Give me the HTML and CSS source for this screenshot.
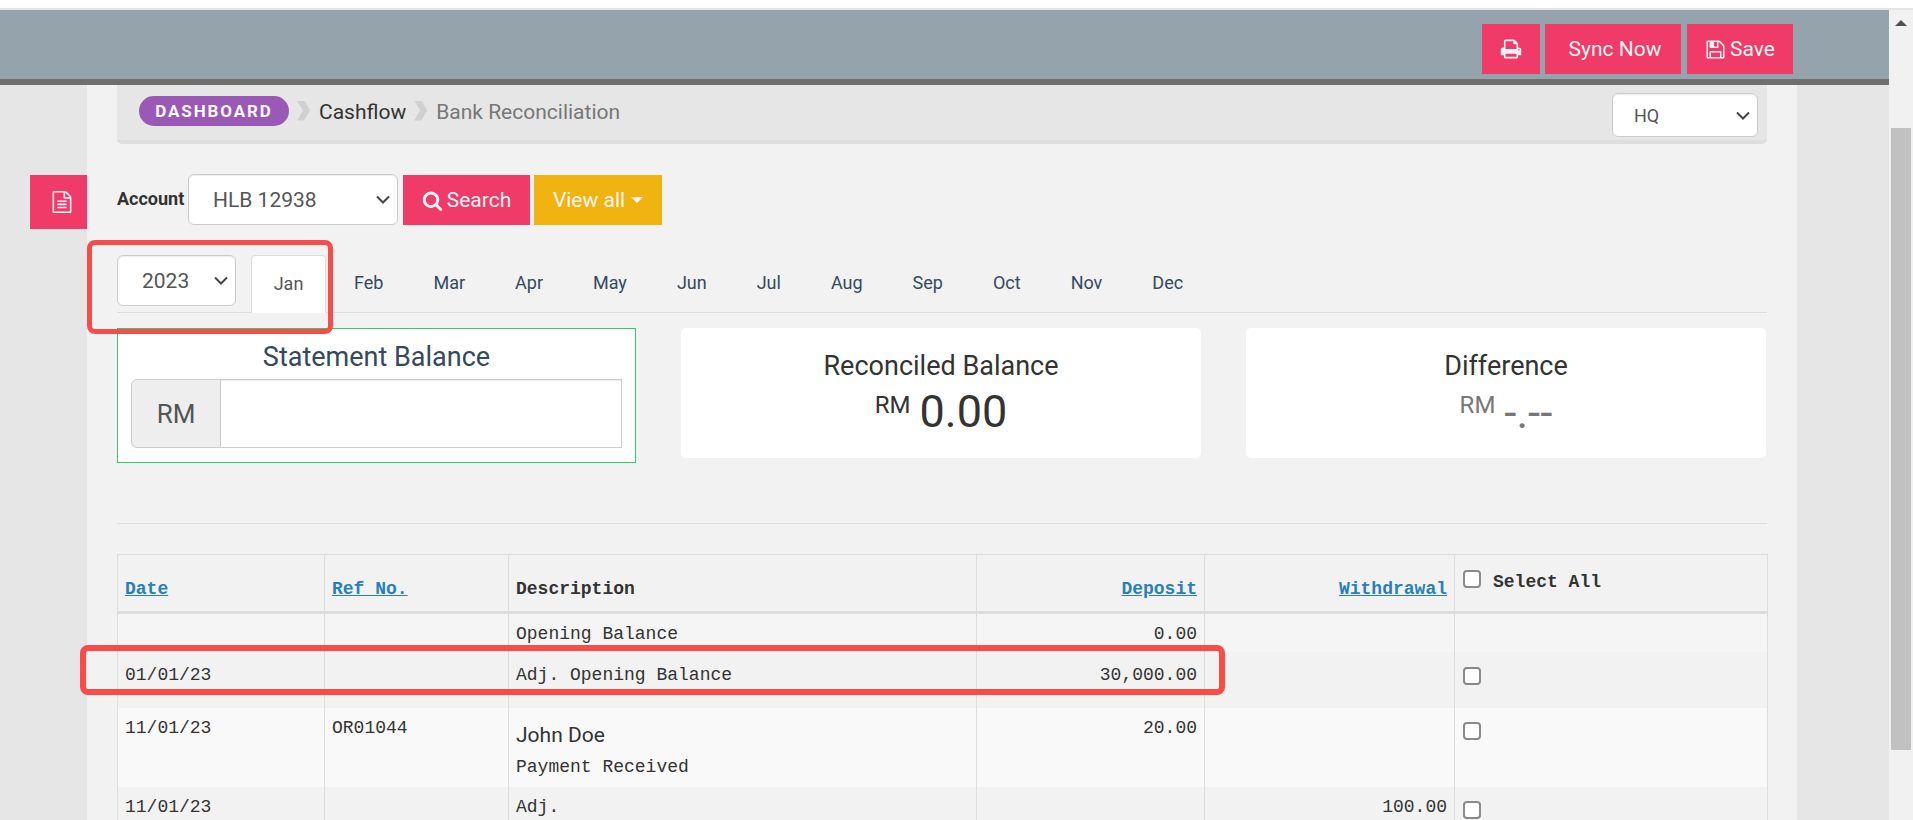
FILE: index.html
```html
<!DOCTYPE html>
<html lang="en">
<head>
<meta charset="utf-8">
<title>Bank Reconciliation</title>
<link rel="stylesheet" href="styles.css">
</head>
<body>
<div class="page">
  <div class="top-strip"></div>
  <div class="frame">
    <div class="viewport">
      <header class="toolbar">
        <button class="btn btn-print" type="button" aria-label="Print">
          <svg class="icon icon-print" viewBox="0 0 1792 1792"><path d="M448 1536h896v-256h-896v256zm0-640h896v-384h-160q-40 0-68-28t-28-68v-160h-640v640zm1152 64q0-26-19-45t-45-19-45 19-19 45 19 45 45 19 45-19 19-45zm128 0v416q0 13-9.500 22.500t-22.500 9.500h-224v160q0 40-28 68t-68 28h-960q-40 0-68-28t-28-68v-160h-224q-13 0-22.500-9.500t-9.500-22.500v-416q0-79 56.500-135.500t135.500-56.500h64v-544q0-40 28-68t68-28h672q40 0 88 20t76 48l152 152q28 28 48 76t20 88v256h64q79 0 135.500 56.500t56.500 135.500z"/></svg>
        </button>
        <button class="btn btn-sync" type="button">Sync Now</button>
        <button class="btn btn-save" type="button">
          <svg class="icon icon-save" viewBox="0 0 1792 1792"><path d="M512 1536h768v-384h-768v384zm896 0h128v-896q0-14-10-38.500t-20-34.500l-281-281q-10-10-34-20t-39-10v416q0 40-28 68t-68 28h-576q-40 0-68-28t-28-68v-416h-128v1280h128v-416q0-40 28-68t68-28h832q40 0 68 28t28 68v416zm-384-928v-320q0-13-9.500-22.500t-22.500-9.500h-192q-13 0-22.500 9.500t-9.500 22.500v320q0 13 9.500 22.500t22.500 9.500h192q13 0 22.500-9.500t9.500-22.500zm640 32v928q0 40-28 68t-68 28h-1344q-40 0-68-28t-28-68v-1344q0-40 28-68t68-28h928q40 0 88 20t76 48l280 280q28 28 48 76t20 88z"/></svg>
          Save
        </button>
      </header>
      <div class="workspace">
        <aside class="gutter">
          <button class="side-btn" type="button" aria-label="Notes">
            <svg class="icon icon-file" viewBox="0 0 1792 1792"><path d="M1596 380q28 28 48 76t20 88v1152q0 40-28 68t-68 28h-1344q-40 0-68-28t-28-68v-1600q0-40 28-68t68-28h896q40 0 88 20t76 48zm-444-244v376h376q-10-29-22-41l-313-313q-12-12-41-22zm384 1528v-1024h-416q-40 0-68-28t-28-68v-416h-768v1536h1280zm-1024-864q0-14 9-23t23-9h704q14 0 23 9t9 23v64q0 14-9 23t-23 9h-704q-14 0-23-9t-9-23v-64zm736 224q14 0 23 9t9 23v64q0 14-9 23t-23 9h-704q-14 0-23-9t-9-23v-64q0-14 9-23t23-9h704zm0 256q14 0 23 9t9 23v64q0 14-9 23t-23 9h-704q-14 0-23-9t-9-23v-64q0-14 9-23t23-9h704z"/></svg>
          </button>
        </aside>
        <main class="content">
          <nav class="crumbs">
            <span class="pill">DASHBOARD</span>
            <span class="chev"></span>
            <span class="crumb">Cashflow</span>
            <span class="chev"></span>
            <span class="crumb crumb-current">Bank Reconciliation</span>
            <select class="select select-branch"><option>HQ</option></select>
          </nav>
          <form class="filter">
            <label class="filter-label">Account</label>
            <select class="select select-account"><option>HLB 12938</option></select>
            <button class="btn btn-search" type="button">
              <svg class="icon icon-search" viewBox="0 0 1792 1792"><path d="M1216 832q0-185-131.500-316.500t-316.500-131.500-316.500 131.500-131.500 316.500 131.500 316.500 316.500 131.500 316.500-131.500 131.500-316.500zm512 832q0 52-38 90t-90 38q-54 0-90-38l-343-342q-179 124-399 124-143 0-273.500-55.500t-225-150-150-225-55.500-273.500 55.500-273.500 150-225 225-150 273.500-55.500 273.500 55.500 225 150 150 225 55.500 273.500q0 220-124 399l343 343q37 37 37 90z"/></svg>
              Search
            </button>
            <button class="btn btn-view" type="button">View all <span class="caret"></span></button>
          </form>
          <div class="tabs">
            <select class="select select-year"><option>2023</option></select>
            <ul class="tab-list">
              <li class="tab tab-active">Jan</li>
              <li class="tab">Feb</li>
              <li class="tab">Mar</li>
              <li class="tab">Apr</li>
              <li class="tab">May</li>
              <li class="tab">Jun</li>
              <li class="tab">Jul</li>
              <li class="tab">Aug</li>
              <li class="tab">Sep</li>
              <li class="tab">Oct</li>
              <li class="tab">Nov</li>
              <li class="tab">Dec</li>
            </ul>
          </div>
          <section class="cards">
            <div class="card card-input">
              <h3 class="card-title title-statement">Statement Balance</h3>
              <div class="input-group">
                <span class="addon">RM</span>
                <input class="amount-input" type="text">
              </div>
            </div>
            <div class="card card-stat">
              <h3 class="card-title">Reconciled Balance</h3>
              <div class="stat"><sup class="stat-unit">RM</sup> <span class="stat-value">0.00</span></div>
            </div>
            <div class="card card-stat card-muted">
              <h3 class="card-title">Difference</h3>
              <div class="stat"><sup class="stat-unit">RM</sup> <span class="stat-value stat-empty">-.--</span></div>
            </div>
          </section>
          <hr class="rule">
          <table class="ledger">
            <colgroup>
              <col class="c-date"><col class="c-ref"><col class="c-desc"><col class="c-dep"><col class="c-wd"><col class="c-sel">
            </colgroup>
            <thead>
              <tr>
                <th><a class="sort" href="#">Date</a></th>
                <th><a class="sort" href="#">Ref No.</a></th>
                <th>Description</th>
                <th class="num"><a class="sort" href="#">Deposit</a></th>
                <th class="num"><a class="sort" href="#">Withdrawal</a></th>
                <th class="th-select"><input class="check" type="checkbox"><span class="select-all">Select All</span></th>
              </tr>
            </thead>
            <tbody>
              <tr class="row-a">
                <td></td><td></td><td>Opening Balance</td><td class="num">0.00</td><td></td><td></td>
              </tr>
              <tr class="row-b row-adj">
                <td>01/01/23</td><td></td><td>Adj. Opening Balance</td><td class="num">30,000.00</td><td></td><td class="td-check"><input class="check" type="checkbox"></td>
              </tr>
              <tr class="row-c">
                <td>11/01/23</td><td>OR01044</td><td><div class="payer">John Doe</div><div>Payment Received</div></td><td class="num">20.00</td><td></td><td class="td-check"><input class="check" type="checkbox"></td>
              </tr>
              <tr class="row-b">
                <td>11/01/23</td><td></td><td>Adj.</td><td></td><td class="num">100.00</td><td class="td-check"><input class="check" type="checkbox"></td>
              </tr>
            </tbody>
          </table>
        </main>
        <div class="margin-right"></div>
      </div>
    </div>
    <div class="scrollbar">
      <span class="scroll-up"></span>
      <span class="scroll-thumb"></span>
    </div>
  </div>
  <div class="mark mark-period"></div>
  <div class="mark mark-row"></div>
</div>
</body>
</html>
```
FILE: styles.css
```css
* { box-sizing: border-box; }
html, body { margin: 0; padding: 0; height: 820px; overflow: hidden; }
body { font-family: Roboto, "Liberation Sans", sans-serif; color: #333; background: #fff; }
.page { position: relative; width: 1913px; height: 820px; overflow: hidden; }
.top-strip { height: 10px; background: #fff; border-bottom: 2px solid #e4e4e4; }
.frame { display: flex; height: 810px; }
.viewport { width: 1889px; height: 810px; overflow: hidden; background: #e6e6e6; }

.toolbar { height: 75px; display: flex; justify-content: flex-end; align-items: flex-start; padding: 14px 96px 0 0; background: #95a3ac; border-bottom: 6px solid #6f6f6f; }
.btn { border: 0; margin: 0; color: #f5f5f5; background: #f03a68; font: 400 21px Roboto, sans-serif; height: 50px; display: flex; align-items: center; justify-content: center; gap: 5px; padding: 0; }
.icon { width: 20px; height: 20px; fill: currentColor; display: block; }
.icon-print { width: 22px; height: 22px; }
.icon-save { width: 21px; height: 21px; }
.btn-print { width: 58px; margin-right: 5px; }
.btn-sync { width: 136px; margin-right: 6px; padding-left: 4px; }
.btn-save { width: 106px; gap: 4px; }

.workspace { display: flex; height: 735px; }
.gutter { width: 87px; padding: 90px 0 0 30px; flex: none; }
.side-btn { width: 57px; height: 54px; border: 0; padding: 0 0 0 7px; background: #f03a68; color: #f5f5f5; display: flex; align-items: center; justify-content: center; }
.icon-file { width: 22px; height: 22px; }
.content { width: 1710px; flex: none; padding: 0 30px; background: #f2f2f2; }
.margin-right { flex: 1; }

.crumbs { height: 59px; display: flex; align-items: center; padding: 0 9px 4px 22px; background: #e6e6e6; border-bottom: 4px solid #dedede; border-radius: 0 0 5px 5px; font-size: 21px; }
.pill { height: 30px; width: 150px; margin-top: 1px; border-radius: 15px; background: #9b59b6; color: #f7f7f7; font-size: 17px; font-weight: 700; letter-spacing: 1.9px; display: flex; align-items: center; justify-content: center; }
.chev { width: 13px; height: 20px; margin: 0 9px 0 8px; background: #d0d0d0; clip-path: polygon(0 0, 55% 0, 100% 50%, 55% 100%, 0 100%, 45% 50%); }
.crumb { margin-top: 2px; color: #333; }
.crumb-current { color: #777; }
.select { appearance: none; font: 400 21px Roboto, sans-serif; color: #555; background-color: #fff; background-image: url("data:image/svg+xml,%3Csvg xmlns='http://www.w3.org/2000/svg' width='14' height='9' viewBox='0 0 14 9'%3E%3Cpath d='M1 1.500l6 6 6-6' fill='none' stroke='%23444' stroke-width='2'/%3E%3C/svg%3E"); background-repeat: no-repeat; background-position: right 7px center; border: 1px solid #ccc; border-radius: 6px; box-shadow: inset 0 1px 1px rgba(0,0,0,.075); padding: 0 18px; margin: 0; }
.select-branch { margin: 9px 0 0 auto; width: 146px; height: 44px; font-size: 18px; padding: 0 21px; }

.filter { display: flex; align-items: flex-start; margin-top: 30px; height: 51px; }
.filter-label { font-size: 18px; font-weight: 700; width: 71px; line-height: 50px; white-space: nowrap; }
.select-account { width: 210px; height: 51px; padding: 0 24px; margin-right: 5px; }
.btn-search { width: 127px; margin-top: 1px; margin-right: 4px; gap: 4px; }
.icon-search { width: 21px; height: 21px; }
.btn-view { width: 128px; margin-top: 1px; background: #f0b30f; }
.caret { width: 0; height: 0; margin-left: 1px; border-left: 6px solid transparent; border-right: 6px solid transparent; border-top: 6px solid #f5f5f5; }

.tabs { display: flex; margin-top: 30px; height: 58px; border-bottom: 1px solid #ddd; }
.select-year { width: 119px; height: 51px; padding: 0 24px; margin-right: 15px; }
.tab-list { display: flex; list-style: none; margin: 0; padding: 0; }
.tab { font-size: 18px; color: #34495e; padding: 17px 23px 0; margin-right: 4px; height: 58px; }
.tab-active { width: 75px; padding: 17px 0 0; margin-right: 5px; text-align: center; color: #555; background: #fff; border: 1px solid #ddd; border-bottom: 0; border-radius: 4px 4px 0 0; }

.cards { display: grid; grid-template-columns: 519px 520px 520px; column-gap: 45px; align-items: start; margin-top: 15px; }
.card { background: #fff; text-align: center; }
.card-input { height: 135px; border: 1px solid #2ecc71; padding: 0 13px; }
.card-stat { height: 130px; border-radius: 5px; padding-top: 22px; }
.card-title { margin: 0; font-weight: 400; font-size: 27px; line-height: 32px; color: #34495e; }
.card-stat .card-title { color: #333; }
.title-statement { padding-top: 12px; height: 50px; }
.input-group { display: flex; height: 69px; }
.addon { width: 90px; display: flex; align-items: center; justify-content: center; font-size: 26px; color: #555; background: #eee; border: 1px solid #ccc; border-radius: 6px 0 0 6px; }
.amount-input { flex: 1; min-width: 0; border: 1px solid #ccc; border-left: 0; box-shadow: inset 0 1px 1px rgba(0,0,0,.075); background: #fff; }
.stat { line-height: 52px; margin-top: 4px; }
.stat-unit { font-size: 24px; vertical-align: 14px; line-height: 0; }
.stat-value { font-size: 45px; margin-left: 5px; }
.card-muted .stat { color: #777; }
.stat-empty { font-size: 44px; position: relative; top: 1px; }

.rule { border: 0; border-top: 1px solid #ddd; margin: 60px 0 30px; }
.ledger { width: 1650px; table-layout: fixed; border-collapse: collapse; font: 400 18px "Liberation Mono", "DejaVu Sans Mono", monospace; color: #333; }
.c-date { width: 207px; }
.c-ref { width: 184px; }
.c-desc { width: 468px; }
.c-dep { width: 228px; }
.c-wd { width: 250px; }
.c-sel { width: 313px; }
.ledger th, .ledger td { border: 1px solid #ddd; vertical-align: top; text-align: left; padding: 11px 7px 9px; line-height: 18px; }
.ledger td { border-top: 0; border-bottom: 0; }
.ledger thead th { height: 58px; padding-top: 25px; font-weight: 700; background: #f2f2f2; border-bottom: 3px solid #ddd; }
.ledger .num { text-align: right; }
.sort { color: #2980b9; text-decoration: underline; }
.ledger .th-select { padding: 15px 7px 0 8px; }
.select-all { margin-left: 12px; vertical-align: top; position: relative; top: 3px; }
.check { appearance: none; width: 18px; height: 18px; margin: 0; background: #fff; border: 2px solid #8a8a8a; border-radius: 4px; display: inline-block; }
.ledger .td-check { padding-left: 8px; }
.td-check .check { margin-top: 3px; }
.row-a td { background: #f5f5f5; height: 39px; }
.row-b td { background: #f2f2f2; }
.row-c td { background: #f9f9f9; height: 79px; }
.row-adj td { height: 56px; padding-top: 14px; }
.row-adj .check { margin-top: 1px; }
.payer { font: 400 21px Roboto, sans-serif; margin: 4px 0 11px; line-height: 24px; }

.scrollbar { width: 24px; height: 810px; background: #f1f1f1; padding: 0 2px; display: flex; flex-direction: column; align-items: center; }
.scroll-up { width: 0; height: 0; margin-top: 10px; border-left: 6px solid transparent; border-right: 6px solid transparent; border-bottom: 6px solid #505050; }
.scroll-thumb { width: 20px; height: 622px; margin-top: 102px; background: #c1c1c1; }

.mark { position: absolute; border-style: solid; border-color: #f94c48; border-radius: 8px; pointer-events: none; }
.mark-period { left: 87px; top: 240px; width: 246px; height: 94px; border-width: 5px; }
.mark-row { left: 80px; top: 645px; width: 1145px; height: 50px; border-width: 6px; }
```
